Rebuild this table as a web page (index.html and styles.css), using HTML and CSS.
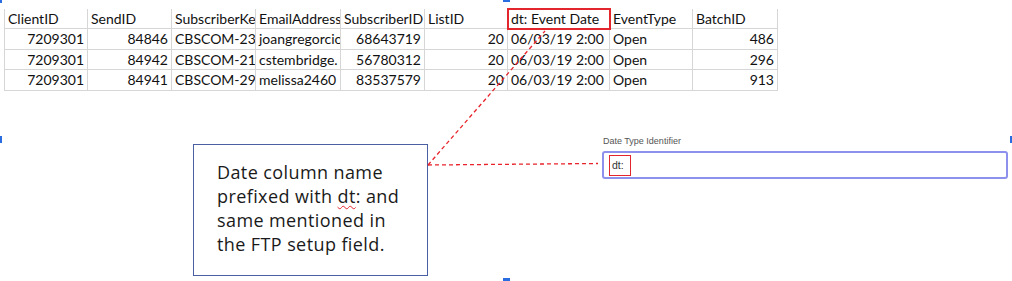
FILE: index.html
```html
<!DOCTYPE html>
<html>
<head>
<meta charset="utf-8">
<link rel="stylesheet" href="styles.css">
</head>
<body>
<div class="slide">
  <table class="sheet">
    <colgroup>
      <col class="c83"><col class="c84"><col class="c84"><col class="c85"><col class="c84"><col class="c83"><col class="c102"><col class="c83"><col class="c85">
    </colgroup>
    <tr class="head">
      <th>ClientID</th><th>SendID</th><th>SubscriberKey</th><th>EmailAddress</th><th>SubscriberID</th><th>ListID</th><th class="marked">dt: Event Date</th><th>EventType</th><th>BatchID</th>
    </tr>
    <tr class="r1">
      <td class="num">7209301</td><td class="num">84846</td><td>CBSCOM-2300</td><td>joangregorcio</td><td class="num">68643719</td><td class="num">20</td><td>06/03/19 2:00</td><td>Open</td><td class="num">486</td>
    </tr>
    <tr class="r2">
      <td class="num">7209301</td><td class="num">84942</td><td>CBSCOM-2160</td><td>cstembridge.</td><td class="num">56780312</td><td class="num">20</td><td>06/03/19 2:00</td><td>Open</td><td class="num">296</td>
    </tr>
    <tr class="r3">
      <td class="num">7209301</td><td class="num">84941</td><td>CBSCOM-2900</td><td>melissa2460</td><td class="num">83537579</td><td class="num">20</td><td>06/03/19 2:00</td><td>Open</td><td class="num">913</td>
    </tr>
  </table>

  <div class="lower">
    <div class="callout">
      <p>Date column name<br>prefixed with <span class="spell">dt</span>: and<br>same mentioned in<br>the FTP setup field.</p>
    </div>
    <div class="field">
      <div class="label">Date Type Identifier</div>
      <div class="input"><span class="val">dt:</span></div>
    </div>
  </div>

  <svg class="arrows" width="1012" height="281" viewBox="0 0 1012 281">
    <line x1="428" y1="165" x2="545" y2="31" />
    <line x1="428" y1="165" x2="598" y2="163.5" />
  </svg>

  <span class="h h-tl"></span>
  <span class="h h-t"></span>
  <span class="h h-l"></span>
  <span class="h h-r"></span>
  <span class="h h-b"></span>
</div>
</body>
</html>
```
FILE: styles.css
```css
html, body {
  margin: 0;
  padding: 0;
  background: #fff;
}
.slide {
  position: relative;
  width: 1012px;
  height: 281px;
  overflow: hidden;
}
.sheet {
  margin: 9px 0 0 4px;
  border-collapse: collapse;
  table-layout: fixed;
  width: 773px;
  font-family: Lato, "Liberation Sans", sans-serif;
  font-size: 14px;
  color: #111;
}
.c83 { width: 83px; }
.c84 { width: 84px; }
.c85 { width: 85px; }
.c102 { width: 102px; }
.sheet th, .sheet td {
  border: 1px solid #d6d6d6;
  border-top: none;
  padding: 0 3px 0 3px;
  white-space: nowrap;
  overflow: hidden;
  text-overflow: clip;
  text-align: left;
  font-weight: normal;
  line-height: 18px;
}
.sheet .head th { height: 19px; }
.sheet .r1 td { height: 20px; }
.sheet .r2 td { height: 19px; }
.sheet .r3 td { height: 20px; }
.sheet td.num {
  text-align: right;
  padding-right: 3px;
}
.sheet th.marked {
  outline: 2px solid #e3262e;
  outline-offset: -1px;
  position: relative;
}
.lower {
  display: flex;
  align-items: flex-start;
  margin-top: 44px;
}
.callout {
  margin: 9px 0 0 193px;
  width: 233px;
  height: 130px;
  border: 1px solid #4b5fa3;
  box-sizing: content-box;
}
.callout p {
  margin: 15px 0 0 23px;
  white-space: nowrap;
  font-family: "Open Sans", Lato, sans-serif;
  font-size: 18px;
  letter-spacing: 0.4px;
  line-height: 24px;
  color: #1a1a1a;
}
.spell {
  text-decoration: underline wavy #e3262e;
  text-decoration-thickness: 1px;
  text-underline-offset: 2px;
}
.field {
  margin-left: 174px;
  width: 406px;
}
.label {
  font-family: "Liberation Sans", sans-serif;
  font-size: 9px;
  line-height: 12px;
  color: #555;
  padding-left: 1px;
}
.input {
  margin-top: 4px;
  height: 28px;
  box-sizing: border-box;
  border: 2px solid #8d90ec;
  border-radius: 3px;
  display: flex;
  align-items: center;
  padding-left: 5px;
}
.val {
  display: inline-block;
  border: 1.5px solid #e3262e;
  width: 18px;
  height: 19px;
  line-height: 19px;
  font-family: "Liberation Sans", sans-serif;
  font-size: 10.5px;
  color: #333;
  padding-left: 2px;
  box-sizing: content-box;
}
.arrows {
  position: absolute;
  left: 0;
  top: 0;
  pointer-events: none;
}
.arrows line {
  stroke: #e8232b;
  stroke-width: 1.3;
  stroke-dasharray: 4 3;
}
.h {
  position: absolute;
  background: #2a6de0;
}
.h-tl { left: 0; top: 0; width: 2px; height: 3px; }
.h-t { left: 503px; top: 0; width: 7px; height: 2px; }
.h-l { left: 0; top: 136px; width: 2px; height: 7px; }
.h-r { left: 1010px; top: 136px; width: 2px; height: 7px; }
.h-b { left: 503px; top: 278px; width: 7px; height: 3px; }
```
